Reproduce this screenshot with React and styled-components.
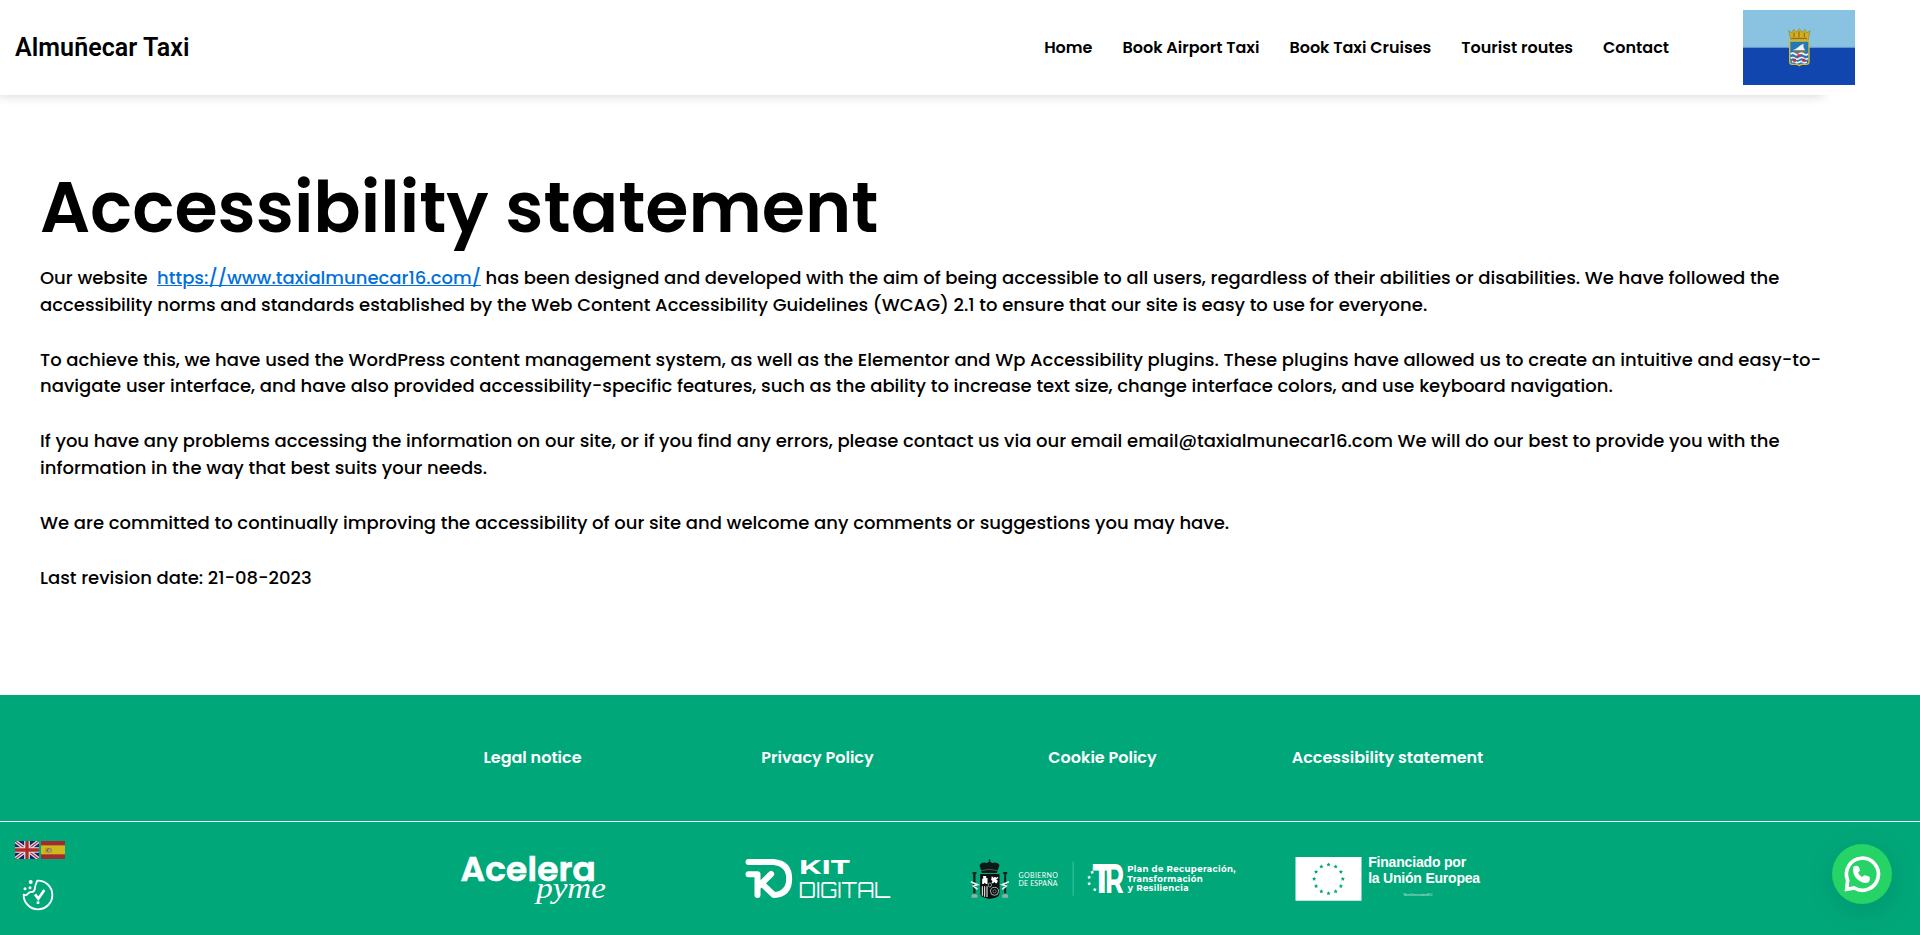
import React from "react";
import styled, { createGlobalStyle } from "styled-components";

const Global = createGlobalStyle`
  *, *::before, *::after { box-sizing: border-box; }
  body { margin: 0; background: #fff; color: #000; overflow: hidden;
    font-family: Poppins, Inter, "Open Sans", sans-serif; }
`;
const Page = styled.div`
  position: relative; width: 1920px; height: 935px;
  display: flex; flex-direction: column; overflow: hidden;
`;
const Header = styled.header`
  width: 1841px; height: 95px; margin-left: -10px; padding-left: 25px;
  display: flex; align-items: center; flex: none;
  box-shadow: 0 9px 10px -8px rgba(0, 0, 0, 0.16);
`;
const Brand = styled.a`font: 600 25px/36px Roboto, sans-serif; letter-spacing: 0.07px; white-space: nowrap;`;
const Nav = styled.nav`margin: 0 74px 0 auto; display: flex; gap: 30px;`;
const NavLink = styled.a`font-size: 16px; font-weight: 600; line-height: 24px; white-space: nowrap;`;
const TownFlag = styled.svg`width: 112px; height: 75px; margin-right: -24px; flex: none;`;
const Main = styled.main`flex: 1; width: 1830px; padding: 73px 0 0 40px;`;
const Title = styled.h1`margin: 0 0 16.9px; font-size: 70px; font-weight: 600; line-height: 80px;`;
const Para = styled.p`margin: 0 0 28.1px; font-size: 18px; font-weight: 500; line-height: 26.8px;`;
const Link = styled.a`color: #0170dc; text-decoration: underline;`;
const Footer = styled.footer`height: 240px; flex: none; background: #00a779; color: #fff;`;
const FooterRow = styled.div`
  display: grid; grid-template-columns: repeat(4, 285px); justify-content: center;
  padding-top: ${p => p.$top}px;
`;
const Links = styled(FooterRow)`height: 127px; border-bottom: 1px solid #fff;`;
const Cell = styled.div`display: flex; justify-content: center;`;
const Logo = styled.svg`width: ${p => p.$w}px; height: 60px; overflow: visible;`;
const Languages = styled.div`position: absolute; left: 15px; top: 841px; display: flex; gap: 2px;`;
const Flag = styled.svg`width: 24px; height: 18px;`;
const CookieIcon = styled.svg`position: absolute; left: 20px; top: 878px; width: 36px; height: 34px;`;
const Chat = styled.button`
  position: absolute; left: 1832px; top: 844px; width: 60px; height: 60px;
  padding: 0; border: 0; border-radius: 50%;
  background: #25d366; box-shadow: 1px 6px 24px rgba(7, 94, 84, 0.24);
`;

function star(cx, cy, r) {
  return Array.from({ length: 10 }, (_, i) => {
    const a = (Math.PI / 5) * i - Math.PI / 2;
    const q = i % 2 ? r * 0.5 : r;
    return `${cx + q * Math.cos(a)},${cy + q * Math.sin(a)}`;
  }).join(" ");
}

const MENU = ["Home", "Book Airport Taxi", "Book Taxi Cruises", "Tourist routes", "Contact"];
const LEGAL = ["Legal notice", "Privacy Policy", "Cookie Policy", "Accessibility statement"];

export default function App() {
  return (
    <Page>
      <Global />
      <Header>
        <Brand>Almuñecar Taxi</Brand>
        <Nav>{MENU.map(t => <NavLink key={t}>{t}</NavLink>)}</Nav>
        <TownFlag viewBox="0 0 336 225">
          <path fill="#8ac3e1" d="M0 0h336v113H0z" />
          <path fill="#1046ae" d="M0 113h336v112H0z" />
          <path stroke="#4a86c6" strokeWidth="2" d="M0 112h336" />
          <path d="M137 62l9 7 6-11 9 9 8-11 8 11 9-9 6 11 9-7-6 29h-51z" fill="#d3ae22" stroke="#8d741c" strokeWidth="1.5" />
          <path d="M145 85h47M153 68v13M168 64v18M184 68v13" stroke="#7b661c" strokeWidth="3" />
          <path d="M140 93h58v63q0 7-8 7h-15l-6 4-6-4h-15q-8 0-8-7z" fill="#2378b8" stroke="#d9bc2b" strokeWidth="4" />
          <path d="M149 121q10-3 17-10t17-10q-5 9 4 20z" fill="#f1f3f5" />
          <path d="M152 123h38l-7 6h-26z" fill="#a6692c" />
          <path d="M143 132q6-5 13 0t13 0 13 0 13 0M143 145q6-5 13 0t13 0 13 0 13 0M147 156q6-4 11 0t11 0 11 0 11 0" fill="none" stroke="#f4f4f6" strokeWidth="5" />
          <path d="M163 133h9v8h-9zM150 146h9v9h-9zM178 146h9v9h-9z" fill="#e02935" />
        </TownFlag>
      </Header>
      <Main>
        <Title>Accessibility statement</Title>
        <Para>
          Our website&nbsp; <Link>https://www.taxialmunecar16.com/</Link> has been designed and developed with the aim of being accessible to all users, regardless of their abilities or disabilities. We have followed the accessibility norms and standards established by the Web Content Accessibility Guidelines (WCAG) 2.1 to ensure that our site is easy to use for everyone.
        </Para>
        <Para>
          To achieve this, we have used the WordPress content management system, as well as the Elementor and Wp Accessibility plugins. These plugins have allowed us to create an intuitive and easy-to-navigate user interface, and have also provided accessibility-specific features, such as the ability to increase text size, change interface colors, and use keyboard navigation.
        </Para>
        <Para>
          If you have any problems accessing the information on our site, or if you find any errors, please contact us via our email email@taxialmunecar16.com We will do our best to provide you with the information in the way that best suits your needs.
        </Para>
        <Para>We are committed to continually improving the accessibility of our site and welcome any comments or suggestions you may have.</Para>
        <Para>Last revision date: 21-08-2023</Para>
      </Main>
      <Footer>
        <Links $top={51}>
          {LEGAL.map(t => <Cell key={t}><NavLink>{t}</NavLink></Cell>)}
        </Links>
        <FooterRow $top={28}>
          <Cell>
            <Logo $w={150} viewBox="52.5 60 450 180" fill="#fff">
              <text x="60" y="153" fontFamily="Poppins, Lato" fontWeight="600" fontSize="103" stroke="#fff" strokeWidth="2" textLength="406">Acelera</text>
              <text x="287" y="205" fontFamily="Liberation Serif" fontStyle="italic" fontSize="86" textLength="209" lengthAdjust="spacingAndGlyphs">pyme</text>
            </Logo>
          </Cell>
          <Cell>
            <Logo $w={150} viewBox="907.5 60 450 180" fill="#fff">
              <path d="M924 96h75q47 4 47 50t-46 49l-35-33M924 133h27v62M951 172l41-40" fill="none" stroke="#fff" strokeWidth="18" strokeLinecap="round" strokeLinejoin="round" />
              <text x="1075" y="132" fontFamily="Montserrat, Inter" fontWeight="700" fontSize="61" textLength="153" lengthAdjust="spacingAndGlyphs">KIT</text>
              <text x="1075" y="204" fontFamily="Orbitron, Inter" fontWeight="400" fontSize="64" textLength="274" lengthAdjust="spacingAndGlyphs">DIGITAL</text>
            </Logo>
          </Cell>
          <Cell>
            <Logo $w={280} viewBox="37.5 60 840 180" fill="#fff">
              <path d="M115 88h4v6h-4zM87 105q8-10 22-6l8-5 8 5q14-4 22 6l-8 24H94z" fill="#0b1a16" />
              <path d="M92 122q25-8 49 0" stroke="#6b7f78" strokeWidth="2" fill="none" />
              <path d="M89 132h58v58q-1 11-13 13l-16 4-16-4q-12-2-13-13z" fill="#0b0f0e" />
              <path d="M98 138h9v6h4v18h-5l-3-4-4 4h-4v-16h3zM124 138l5 5 5-3 3 3 6-3v5l-6 3 5 4-3 8h-4l-3-4-5 4h-4l3-7-4-3zM94 169h3v28h-3zM101 169h3v31h-3zM108 169h3v32h-3z" />
              <circle cx="132" cy="184" r="12" fill="none" stroke="#a9b5b1" strokeWidth="3" />
              <circle cx="132" cy="184" r="5" fill="none" stroke="#8c9995" strokeWidth="2" />
              <ellipse cx="118" cy="165" rx="5" ry="6" fill="#0b0f0e" stroke="#ccd6d2" strokeWidth="2" />
              <path d="M66 126h12v6h-3v58h-7v-58h-2zM158 126h12v6h-3v58h-6v-58h-3z" fill="#10201b" />
              <path d="M63 203v-8q9-6 18 0v8zM155 203v-8q9-6 18 0v8z" fill="#8fb0a5" />
              <path d="M61 155l20 9-12 4 12 10M175 155l-20 9 12 4-12 10" fill="none" stroke="#e8f3ef" strokeWidth="5" />
              <text x="204" y="144" fontFamily="Lato" fontSize="21" textLength="118">GOBIERNO</text>
              <text x="204" y="167" fontFamily="Lato" fontSize="21" textLength="117">DE ESPAÑA</text>
              <path d="M368 95v102" stroke="#68cbb0" strokeWidth="2" />
              <text x="427" y="188" fontFamily="Montserrat, Inter" fontWeight="800" fontSize="123" textLength="54" lengthAdjust="spacingAndGlyphs">T</text>
              <text x="463" y="188" fontFamily="Montserrat, Inter" fontWeight="700" fontSize="123" textLength="58" lengthAdjust="spacingAndGlyphs">R</text>
              {[[425, 127], [416, 142], [416, 161], [433, 179]].map(([x, y]) => (
                <polygon key={y} points={star(x, y, 6)} />
              ))}
              <g fontFamily="Montserrat, Poppins" fontWeight="700" fontSize="26">
                <text x="530" y="126" textLength="325">Plan de Recuperación,</text>
                <text x="530" y="155" textLength="227">Transformación</text>
                <text x="532" y="184" textLength="182">y Resiliencia</text>
              </g>
            </Logo>
          </Cell>
          <Cell>
            <Logo $w={210} viewBox="37.5 60 630 180" fill="#fff">
              <path d="M75 81h198v131H75z" />
              {Array.from({ length: 12 }, (_, i) => (
                <polygon key={i} fill="#00a779" points={star(174 + 43 * Math.sin((i * Math.PI) / 6), 147 - 43 * Math.cos((i * Math.PI) / 6), 6.5)} />
              ))}
              <g fontFamily="Liberation Sans" fontWeight="700" fontSize="42">
                <text x="293" y="112" textLength="294">Financiado por</text>
                <text x="293" y="160" textLength="336">la Unión Europea</text>
              </g>
              <text x="399" y="198" fontFamily="Liberation Sans" fontSize="10.5" opacity=".75" textLength="86">NextGenerationEU</text>
            </Logo>
          </Cell>
        </FooterRow>
      </Footer>
      <Languages>
        <Flag viewBox="0 0 72 54">
          <path fill="#10246b" d="M0 0h72v54H0z" />
          <path stroke="#e3e5ea" strokeWidth="11" d="M0 0l72 54M72 0L0 54" />
          <path stroke="#bd2f3a" strokeWidth="4" d="M0 0l72 54M72 0L0 54" />
          <path stroke="#e3e5ea" strokeWidth="17" d="M36 0v54M0 27h72" />
          <path stroke="#b02a2a" strokeWidth="10" d="M36 0v54M0 27h72" />
        </Flag>
        <Flag viewBox="0 0 72 54">
          <path fill="#a32a31" d="M0 0h72v54H0z" />
          <path fill="#cdb91d" d="M0 13h72v27H0z" />
          <path fill="#b08f35" d="M13 20h3v15h-3zM30 20h3v15h-3z" />
          <circle cx="23" cy="28" r="7" fill="#8a6a3a" />
          <circle cx="25" cy="29" r="4" fill="#b0a88c" />
        </Flag>
      </Languages>
      <CookieIcon viewBox="60 174 108 102" fill="#fff">
        <path d="M112 182A43 43 0 1 1 71 224q9 4 14-4 4-5 11-4 8-1 9-13 1-9 7-21z" fill="none" stroke="#fff" strokeWidth="5.5" strokeLinejoin="round" />
        <circle cx="92" cy="186" r="6" />
        <circle cx="75" cy="206" r="4.5" />
        <circle cx="90" cy="203" r="4.5" />
        <path d="M105 223l10 13 18-26" fill="none" stroke="#fff" strokeWidth="8" />
        <path d="M110 244h8v8h-8z" />
      </CookieIcon>
      <Chat aria-label="WhatsApp">
        <svg width="60" height="60" viewBox="96 72 180 180">
          <path d="M140 208l3-27a48 48 0 1 1 20 23z" fill="none" stroke="#fff" strokeWidth="11" />
          <path d="M160 140q8-5 15-1 5 6 5 13l-6 6q4 8 12 13l7-5q8 0 16 5 2 8-3 16-10 4-20 0-26-12-27-38z" fill="#fff" />
        </svg>
      </Chat>
    </Page>
  );
}
